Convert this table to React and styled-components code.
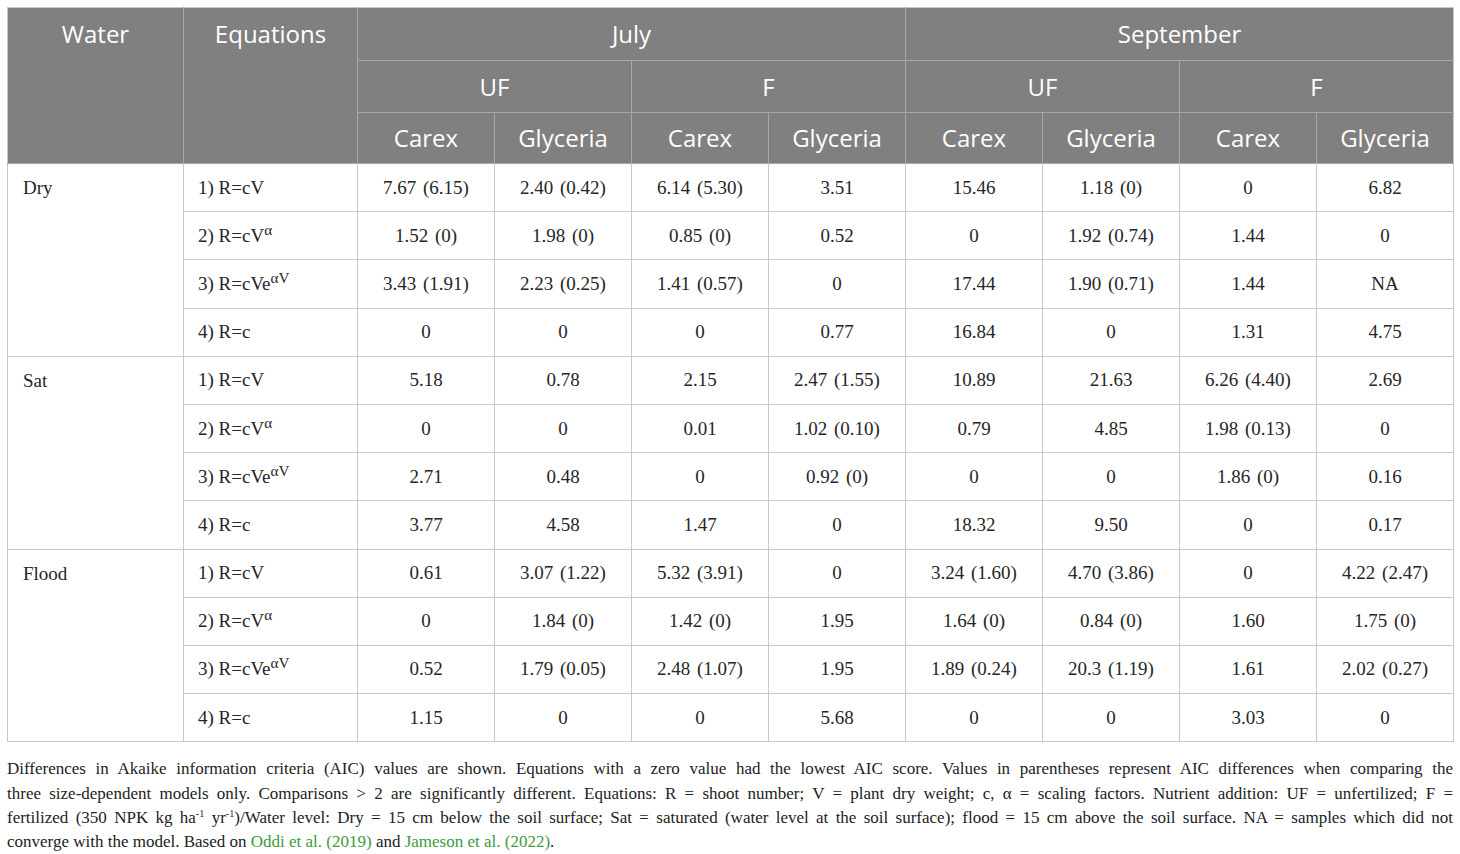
import React from "react";
import styled, { createGlobalStyle } from "styled-components";

const GlobalStyle = createGlobalStyle`
  html, body {
    margin: 0;
    padding: 0;
    background: #ffffff;
  }
`;

const groups = [
  {
    water: "Dry",
    rows: [
      ["7.67 (6.15)", "2.40 (0.42)", "6.14 (5.30)", "3.51", "15.46", "1.18 (0)", "0", "6.82"],
      ["1.52 (0)", "1.98 (0)", "0.85 (0)", "0.52", "0", "1.92 (0.74)", "1.44", "0"],
      ["3.43 (1.91)", "2.23 (0.25)", "1.41 (0.57)", "0", "17.44", "1.90 (0.71)", "1.44", "NA"],
      ["0", "0", "0", "0.77", "16.84", "0", "1.31", "4.75"],
    ],
  },
  {
    water: "Sat",
    rows: [
      ["5.18", "0.78", "2.15", "2.47 (1.55)", "10.89", "21.63", "6.26 (4.40)", "2.69"],
      ["0", "0", "0.01", "1.02 (0.10)", "0.79", "4.85", "1.98 (0.13)", "0"],
      ["2.71", "0.48", "0", "0.92 (0)", "0", "0", "1.86 (0)", "0.16"],
      ["3.77", "4.58", "1.47", "0", "18.32", "9.50", "0", "0.17"],
    ],
  },
  {
    water: "Flood",
    rows: [
      ["0.61", "3.07 (1.22)", "5.32 (3.91)", "0", "3.24 (1.60)", "4.70 (3.86)", "0", "4.22 (2.47)"],
      ["0", "1.84 (0)", "1.42 (0)", "1.95", "1.64 (0)", "0.84 (0)", "1.60", "1.75 (0)"],
      ["0.52", "1.79 (0.05)", "2.48 (1.07)", "1.95", "1.89 (0.24)", "20.3 (1.19)", "1.61", "2.02 (0.27)"],
      ["1.15", "0", "0", "5.68", "0", "0", "3.03", "0"],
    ],
  },
];

const Equation = ({ n }) => {
  if (n === 0) return <>1) R=cV</>;
  if (n === 1)
    return (
      <>
        2) R=cV<Sup>α</Sup>
      </>
    );
  if (n === 2)
    return (
      <>
        3) R=cVe<Sup>αV</Sup>
      </>
    );
  return <>4) R=c</>;
};

const App = () => {
  return (
    <>
      <GlobalStyle />
      <Page>
        <Table>
          <colgroup>
            <col style={{ width: 176 }} />
            <col style={{ width: 174 }} />
            {Array.from({ length: 8 }).map((_, i) => (
              <col key={i} style={{ width: 137 }} />
            ))}
          </colgroup>
          <thead>
            <HeadRow $h={53}>
              <HeadCell rowSpan={3} $top>Water</HeadCell>
              <HeadCell rowSpan={3} $top>Equations</HeadCell>
              <HeadCell colSpan={4}>July</HeadCell>
              <HeadCell colSpan={4}>September</HeadCell>
            </HeadRow>
            <HeadRow $h={52}>
              <HeadCell colSpan={2}>UF</HeadCell>
              <HeadCell colSpan={2}>F</HeadCell>
              <HeadCell colSpan={2}>UF</HeadCell>
              <HeadCell colSpan={2}>F</HeadCell>
            </HeadRow>
            <HeadRow $h={51}>
              {["Carex", "Glyceria", "Carex", "Glyceria", "Carex", "Glyceria", "Carex", "Glyceria"].map(
                (name, i) => (
                  <HeadCell key={i}>{name}</HeadCell>
                )
              )}
            </HeadRow>
          </thead>
          <tbody>
            {groups.map((group) =>
              group.rows.map((values, r) => (
                <BodyRow key={group.water + r}>
                  {r === 0 && <WaterCell rowSpan={4}>{group.water}</WaterCell>}
                  <EquationCell>
                    <Equation n={r} />
                  </EquationCell>
                  {values.map((v, i) => (
                    <ValueCell key={i}>{v}</ValueCell>
                  ))}
                </BodyRow>
              ))
            )}
          </tbody>
        </Table>
        <Footnote>
          <FootLine>
            Differences in Akaike information criteria (AIC) values are shown. Equations with a zero value had the
            lowest AIC score. Values in parentheses represent AIC differences when comparing the
          </FootLine>
          <FootLine>
            three size-dependent models only. Comparisons &gt; 2 are significantly different. Equations: R = shoot
            number; V = plant dry weight; c, α = scaling factors. Nutrient addition: UF = unfertilized; F =
          </FootLine>
          <FootLine>
            fertilized (350 NPK kg ha<SmallSup>-1</SmallSup> yr<SmallSup>-1</SmallSup>)/Water level: Dry = 15 cm
            below the soil surface; Sat = saturated (water level at the soil surface); flood = 15 cm above the soil
            surface. NA = samples which did not
          </FootLine>
          <FootLine $last>
            converge with the model. Based on <Ref href="#">Oddi et al. (2019)</Ref> and{" "}
            <Ref href="#">Jameson et al. (2022)</Ref>.
          </FootLine>
        </Footnote>
      </Page>
    </>
  );
};

export default App;

const Page = styled.div`
  padding: 7px 7px 0 7px;
`;

const Table = styled.table`
  width: 1446px;
  border-collapse: collapse;
  table-layout: fixed;
  border: 1px solid #c9c9c9;
`;

const HeadRow = styled.tr`
  height: ${(p) => p.$h}px;
`;

const HeadCell = styled.th`
  background-color: #7f807f;
  color: #ffffff;
  font-family: "Open Sans", "Noto Sans", sans-serif;
  font-weight: 400;
  font-size: 24px;
  line-height: 30px;
  text-align: center;
  vertical-align: ${(p) => (p.$top ? "top" : "middle")};
  padding: ${(p) => (p.$top ? "11px 8px 0" : "0 8px")};
  border: 1px solid #a6a6a6;
  border-top-color: #c9c9c9;
  &:first-child {
    border-left-color: #c9c9c9;
  }
  &:last-child {
    border-right-color: #c9c9c9;
  }
`;

const BodyRow = styled.tr`
  height: 48.2px;
`;

const BodyCell = styled.td`
  font-family: "Liberation Serif", "Times New Roman", serif;
  font-size: 19px;
  line-height: 22px;
  color: #262626;
  border: 1px solid #c9c9c9;
`;

const WaterCell = styled(BodyCell)`
  vertical-align: top;
  text-align: left;
  padding: 13px 15px 0;
`;

const EquationCell = styled(BodyCell)`
  vertical-align: middle;
  text-align: left;
  padding: 0 14px;
`;

const ValueCell = styled(BodyCell)`
  vertical-align: middle;
  text-align: center;
  padding: 0 6px;
  word-spacing: 2px;
`;

const Sup = styled.sup`
  font-size: 0.8em;
  line-height: 0;
  vertical-align: 0.45em;
`;

const Footnote = styled.div`
  width: 1446px;
  margin-top: 15px;
  font-family: "Liberation Serif", "Times New Roman", serif;
  font-size: 17px;
  line-height: 24.4px;
  color: #222222;
`;

const FootLine = styled.div`
  text-align: ${(p) => (p.$last ? "left" : "justify")};
  text-align-last: ${(p) => (p.$last ? "left" : "justify")};
`;

const SmallSup = styled.sup`
  font-size: 0.6em;
  line-height: 0;
  vertical-align: 0.6em;
`;

const Ref = styled.a`
  color: #3d9b3d;
  text-decoration: none;
`;
